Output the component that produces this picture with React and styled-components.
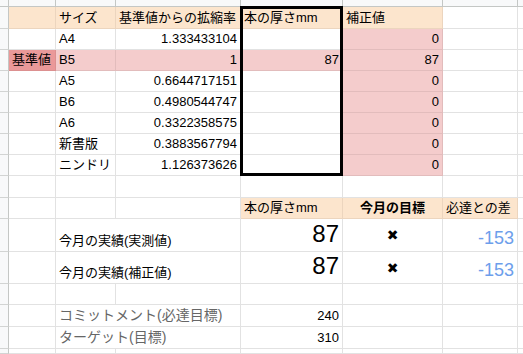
import React from 'react';
import styled, { createGlobalStyle } from 'styled-components';

const GlobalStyle = createGlobalStyle`
  html, body {
    margin: 0;
    padding: 0;
    background: #ffffff;
  }
  body {
    font-family: "Liberation Sans", "Noto Sans CJK JP", sans-serif;
    font-size: 13px;
    color: #000000;
  }
`;

const FILLS = {
  none: { bg: '#ffffff', line: '#e2e2e2' },
  head: { bg: '#fce5cd', line: '#ecd5be' },
  pink: { bg: '#f4cccc', line: '#e2bcbc' },
  red: { bg: '#ea9999', line: '#dc9090' },
};

const ROW_HEIGHTS = [7, 22, 21, 21, 21, 21, 21, 21, 21, 22, 21, 33, 32, 21, 22, 22];

const Sheet = styled.div`
  display: grid;
  grid-template-columns: 9px 47px 60px 125px 102px 100px 75px 1fr;
  grid-template-rows: ${ROW_HEIGHTS.map(h => `${h}px`).join(' ')} 1fr;
  width: 523px;
  height: 354px;
  overflow: hidden;
`;

const HeaderStrip = styled.div`
  grid-row: 1;
  grid-column: ${props => props.$col};
  background: #f8f9fa;
  border-right: 1px solid #c4c7c5;
  border-bottom: 1px solid #c4c7c5;
`;

const RowHead = styled.div`
  grid-row: ${props => props.$row};
  grid-column: 1;
  background: #f8f9fa;
  border-right: 1px solid #c4c7c5;
  border-bottom: 1px solid #d2d4d3;
`;

const Cell = styled.div`
  grid-row: ${props => props.$row};
  grid-column: ${props => props.$col} / span ${props => props.$span || 1};
  display: flex;
  align-items: ${props => (props.$middle ? 'center' : 'flex-end')};
  justify-content: ${props =>
    props.$align === 'right' ? 'flex-end' : props.$align === 'center' ? 'center' : 'flex-start'};
  padding: 0 3px ${props => (props.$middle ? 0 : props.$pad || 3)}px 3px;
  background: ${props => FILLS[props.$fill || 'none'].bg};
  border-right: 1px solid ${props => FILLS[props.$fill || 'none'].line};
  border-bottom: 1px solid ${props => FILLS[props.$fill || 'none'].line};
  font-size: ${props => props.$size || 13}px;
  line-height: ${props => props.$lh || 15}px;
  font-weight: ${props => (props.$bold ? 700 : 400)};
  color: ${props => props.$color || '#000000'};
  white-space: nowrap;
  overflow: hidden;
`;

const Cross = styled.span`
  font-family: "DejaVu Sans", sans-serif;
  font-size: 14px;
  line-height: 14px;
  font-weight: 700;
  color: #000000;
`;

// thick outline around the 本の厚さmm column
const Frame = styled.div`
  grid-row: 2 / 10;
  grid-column: 5;
  margin: -1px 0 0 -1px;
  border: 3px solid #000000;
  pointer-events: none;
  z-index: 1;
`;

const big = { $align: 'right', $size: 24, $lh: 27, $pad: 4 };
const diff = { $align: 'right', $size: 18, $lh: 20, $pad: 3, $color: '#6d9eeb' };
const goal = { $span: 2, $size: 14, $lh: 16, $color: '#666666' };

// one entry per sheet row; cells keyed by column (1 = A ... 7 = G)
const ROWS = [
  {
    1: { $fill: 'head' },
    2: { text: 'サイズ', $fill: 'head' },
    3: { text: '基準値からの拡縮率', $fill: 'head' },
    4: { text: '本の厚さmm', $fill: 'head' },
    5: { text: '補正値', $fill: 'head' },
  },
  { 2: { text: 'A4' }, 3: { text: '1.333433104', $align: 'right' }, 5: { text: '0', $align: 'right', $fill: 'pink' } },
  {
    1: { text: '基準値', $fill: 'red' },
    2: { text: 'B5', $fill: 'pink' },
    3: { text: '1', $align: 'right', $fill: 'pink' },
    4: { text: '87', $align: 'right', $fill: 'pink' },
    5: { text: '87', $align: 'right', $fill: 'pink' },
  },
  { 2: { text: 'A5' }, 3: { text: '0.6644717151', $align: 'right' }, 5: { text: '0', $align: 'right', $fill: 'pink' } },
  { 2: { text: 'B6' }, 3: { text: '0.4980544747', $align: 'right' }, 5: { text: '0', $align: 'right', $fill: 'pink' } },
  { 2: { text: 'A6' }, 3: { text: '0.3322358575', $align: 'right' }, 5: { text: '0', $align: 'right', $fill: 'pink' } },
  { 2: { text: '新書版' }, 3: { text: '0.3883567794', $align: 'right' }, 5: { text: '0', $align: 'right', $fill: 'pink' } },
  { 2: { text: 'ニンドリ' }, 3: { text: '1.126373626', $align: 'right' }, 5: { text: '0', $align: 'right', $fill: 'pink' } },
  {},
  {
    4: { text: '本の厚さmm', $fill: 'head' },
    5: { text: '今月の目標', $fill: 'head', $align: 'center', $bold: true },
    6: { text: '必達との差', $fill: 'head' },
  },
  {
    2: { text: '今月の実績(実測値)', $span: 2 },
    4: { text: '87', ...big },
    5: { cross: true, $align: 'center', $middle: true },
    6: { text: '-153', ...diff },
  },
  {
    2: { text: '今月の実績(補正値)', $span: 2 },
    4: { text: '87', ...big },
    5: { cross: true, $align: 'center', $middle: true },
    6: { text: '-153', ...diff },
  },
  {},
  { 2: { text: 'コミットメント(必達目標)', ...goal }, 4: { text: '240', $align: 'right' } },
  { 2: { text: 'ターゲット(目標)', ...goal }, 4: { text: '310', $align: 'right' } },
  {},
];

function SheetRow({ cells, row }) {
  const out = [<RowHead key="h" $row={row} />];
  let col = 1;
  while (col <= 7) {
    const { text, cross, ...props } = cells[col] || {};
    out.push(
      <Cell key={col} $row={row} $col={col + 1} {...props}>
        {cross ? <Cross>✖</Cross> : text}
      </Cell>
    );
    col += props.$span || 1;
  }
  return out;
}

export default function App() {
  return (
    <>
      <GlobalStyle />
      <Sheet>
        {[1, 2, 3, 4, 5, 6, 7, 8].map(c => (
          <HeaderStrip key={c} $col={c} />
        ))}
        {ROWS.map((cells, i) => (
          <SheetRow key={i} cells={cells} row={i + 2} />
        ))}
        <Frame />
      </Sheet>
    </>
  );
}
